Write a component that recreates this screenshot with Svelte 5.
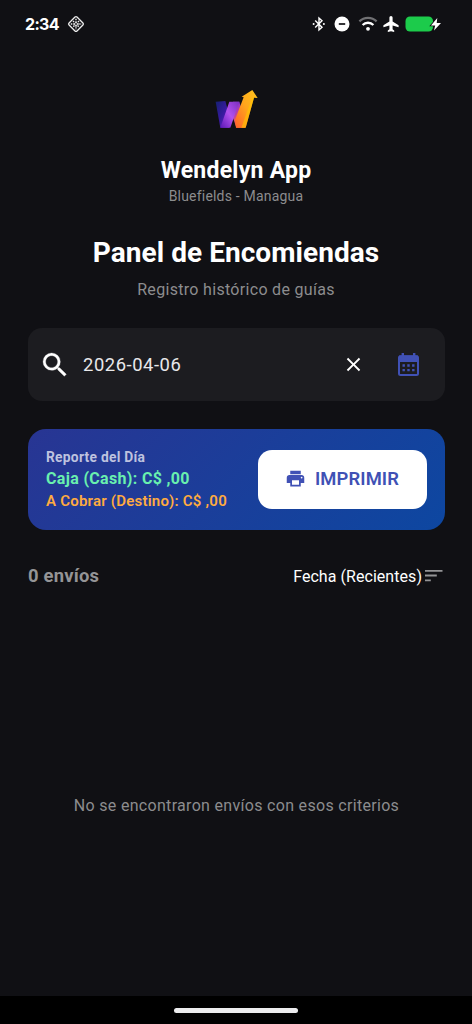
<script lang="ts">
  let query = $state('2026-04-06');

  const report = {
    title: 'Reporte del Día',
    cash: 'Caja (Cash): C$ ,00',
    pending: 'A Cobrar (Destino): C$ ,00',
  };

  const shipments: string[] = [];
  const sortLabel = 'Fecha (Recientes)';
</script>

<div class="screen">
  <div class="status">
    <span class="status__time">2:34</span>
    <svg class="status__app" width="18" height="18" viewBox="0 0 18 18">
      <rect x="3.4" y="3.4" width="11.2" height="11.2" rx="1.4" transform="rotate(45 9 9)" fill="none" stroke="#eee" stroke-width="1.3" />
      <circle cx="9" cy="9" r="1.5" fill="none" stroke="#eee" stroke-width="1" />
      <path d="M9 3.8v3M9 11.2v3M3.8 9h3M11.2 9h3M6 6l1.4 1.4M10.6 10.6l1.4 1.4M12 6l-1.4 1.4M7.4 10.6L6 12" stroke="#eee" stroke-width="1.4" stroke-dasharray="1.5 .7" />
    </svg>
    <div class="status__icons">
      <svg width="14" height="16" viewBox="0 0 14 16">
        <path d="M3.2 4.6l6.8 6.7L7 14V2l3 2.7-6.8 6.7" fill="none" stroke="#fff" stroke-width="1.4" />
        <circle cx="1.6" cy="8" r="1" fill="#fff" />
        <circle cx="11.9" cy="8" r="1" fill="#fff" />
      </svg>
      <svg class="status__dnd" width="16" height="16" viewBox="0 0 16 16">
        <circle cx="8" cy="8" r="7.5" fill="#fff" />
        <path d="M4.8 8h6.4" stroke="#101014" stroke-width="1.7" />
      </svg>
      <svg class="status__wifi" width="20" height="16" viewBox="0 0 20 16">
        <path d="M1.4 5.4a12.4 12.4 0 0 1 17.2 0" fill="none" stroke="#707073" stroke-width="2.3" />
        <path d="M4.6 9a7.600 7.600 0 0 1 10.800 0" fill="none" stroke="#fff" stroke-width="2.3" />
        <circle cx="10" cy="12.800" r="1.900" fill="#fff" />
      </svg>
      <svg class="status__plane" width="16" height="16" viewBox="2 2 20 20">
        <path d="M21.500 16v-2.300L14 9V4a2 2 0 0 0-4 0v5l-7.500 4.700V16l7.500-2v4.500l-2 1.700V22l4-1 4 1v-1.800l-2-1.700V14z" fill="#fff" />
      </svg>
      <svg class="status__battery" width="38" height="16" viewBox="0 0 38 16">
        <rect x="0.500" y=".5" width="27.500" height="15" rx="4.500" fill="#1ccb4b" />
        <path d="M32.300 2L26 9.500h4.200L29 14.400 36 7h-4.300z" fill="#fff" stroke="#101014" stroke-width="1.600" paint-order="stroke" />
      </svg>
    </div>
  </div>

  <header class="header">
    <svg class="logo" width="64" height="60" viewBox="0 0 192 180">
      <defs>
        <linearGradient id="logo-left" x1="0" y1="0" x2="1" y2="1">
          <stop offset="0" stop-color="#142070" />
          <stop offset=".5" stop-color="#381aa0" />
          <stop offset="1" stop-color="#7d24d6" />
        </linearGradient>
        <linearGradient id="logo-mid" x1="1" y1="0" x2="0" y2="1">
          <stop offset="0" stop-color="#7b2fc0" />
          <stop offset=".5" stop-color="#b251ee" />
          <stop offset="1" stop-color="#5b18b6" />
        </linearGradient>
        <linearGradient id="logo-right" x1="0" y1="0" x2="0" y2="1">
          <stop offset="0" stop-color="#8b35d0" />
          <stop offset=".55" stop-color="#c44495" />
          <stop offset="1" stop-color="#ff6b35" />
        </linearGradient>
        <linearGradient id="logo-arrow" x1="1" y1="0" x2="0" y2="1">
          <stop offset="0" stop-color="#ffc51c" />
          <stop offset=".5" stop-color="#ffa41c" />
          <stop offset="1" stop-color="#ff5f2b" />
        </linearGradient>
      </defs>
      <path d="M32 65l29-2 15 56-4 24H46z" fill="url(#logo-left)" />
      <path d="M84 65h19l18 60-1 18H94L80 101z" fill="url(#logo-right)" />
      <path d="M73 65h30L76 143H46z" fill="url(#logo-mid)" />
      <path d="M93 143l-3-24 26-67-6-2 32-20 16 24-11-1-25 90z" fill="url(#logo-arrow)" />
      <path d="M109 143l33-91 5 1-25 90z" fill="#ffc400" opacity=".6" />
    </svg>
    <div class="header__name">Wendelyn App</div>
    <div class="header__route">Bluefields - Managua</div>
    <h1 class="header__title">Panel de Encomiendas</h1>
    <p class="header__subtitle">Registro histórico de guías</p>
  </header>

  <main class="content">
    <div class="search">
      <svg width="32" height="32" viewBox="0 0 24 24">
        <path d="M15.500 14h-.79l-.28-.27A6.470 6.470 0 0 0 16 9.500 6.500 6.500 0 1 0 9.500 16c1.610 0 3.090-.59 4.230-1.570l.27.28v.79l5 4.990L20.490 19zm-6 0C7.010 14 5 11.990 5 9.500S7.010 5 9.500 5 14 7.010 14 9.500 11.990 14 9.500 14z" fill="#fff" stroke="#fff" stroke-width=".2" />
      </svg>
      <input class="search__input" type="text" bind:value={query} aria-label="Buscar" />
      <button class="search__button" aria-label="Limpiar" onclick={() => (query = '')}>
        <svg width="23" height="23" viewBox="0 0 24 24">
          <path d="M19 6.410L17.590 5 12 10.590 6.410 5 5 6.410 10.590 12 5 17.590 6.410 19 12 13.410 17.590 19 19 17.590 13.410 12z" fill="#fff" />
        </svg>
      </button>
      <button class="search__button search__button--date" aria-label="Elegir fecha">
        <svg width="24" height="26" viewBox="0 0 24 26">
          <path d="M5.800 1v4M17.200 1v4" stroke="#4051b5" stroke-width="2.400" />
          <rect x="2" y="4.200" width="19" height="18.800" rx="1.500" fill="none" stroke="#4051b5" stroke-width="2" />
          <path d="M2 3.500h19V10H2z" fill="#4051b5" />
          <path d="M5.500 13.500h2.400M10.300 13.500h2.400M15.100 13.500h2.400M5.500 18.100h2.400M10.300 18.100h2.400M15.100 18.100h2.400" stroke="#4051b5" stroke-width="2.400" />
        </svg>
      </button>
    </div>

    <section class="report">
      <div class="report__info">
        <div class="report__title">{report.title}</div>
        <div class="report__cash">{report.cash}</div>
        <div class="report__pending">{report.pending}</div>
      </div>
      <button class="print">
        <svg width="21" height="21" viewBox="0 0 24 24">
          <path d="M19 8H5c-1.660 0-3 1.340-3 3v6h4v4h12v-4h4v-6c0-1.660-1.340-3-3-3zm-3 11H8v-5h8zm3-7c-.55 0-1-.45-1-1s.45-1 1-1 1 .45 1 1-.45 1-1 1zm-1-9H6v4h12z" fill="#4051b5" />
        </svg>
        <span>IMPRIMIR</span>
      </button>
    </section>

    <div class="toolbar">
      <span class="toolbar__count">{shipments.length} envíos</span>
      <button class="sort">
        <span>{sortLabel}</span>
        <svg width="20" height="14" viewBox="0 0 20 14">
          <path d="M1 1.800h17.500M1 6.500h11.800M1 11.300h5.800" stroke="#949496" stroke-width="1.800" />
        </svg>
      </button>
    </div>

    {#if shipments.length === 0}
      <p class="empty">No se encontraron envíos con esos criterios</p>
    {/if}
  </main>

  <div class="navbar">
    <div class="navbar__handle"></div>
  </div>
</div>

<style>
  :global(body) {
    margin: 0;
    background: #000;
  }

  .screen {
    display: flex;
    flex-direction: column;
    width: 472px;
    height: 1024px;
    overflow: hidden;
    background: #101014;
    color: #fff;
    font-family: Roboto, sans-serif;
  }

  button {
    padding: 0;
    border: 0;
    background: none;
    color: inherit;
    font: inherit;
  }

  svg {
    display: block;
    flex: none;
  }

  .status {
    display: flex;
    align-items: center;
    box-sizing: border-box;
    height: 48px;
    padding: 0 29px 0 25px;
  }

  .status__time {
    width: 42px;
    font: 700 16px/20px Inter, sans-serif;
    letter-spacing: -0.7px;
  }

  .status__icons {
    display: flex;
    align-items: center;
    margin-left: auto;
  }

  .status__dnd {
    margin-left: 8px;
  }

  .status__wifi {
    margin-left: 8px;
  }

  .status__plane {
    margin-left: 5px;
  }

  .status__battery {
    margin-left: 6px;
  }

  .header {
    display: flex;
    flex-direction: column;
    align-items: center;
    padding-top: 32px;
    text-align: center;
  }

  .logo {
    margin-left: 1px;
  }

  .header__name {
    margin-top: 16px;
    font-size: 23px;
    line-height: 30px;
    font-weight: 700;
    letter-spacing: 0.25px;
  }

  .header__route {
    margin-top: 1px;
    font-size: 14px;
    line-height: 18px;
    letter-spacing: 0.2px;
    color: #8c8c8e;
  }

  .header__title {
    margin: 30px 0 0;
    font-size: 28px;
    line-height: 36px;
    font-weight: 700;
    letter-spacing: 0.05px;
  }

  .header__subtitle {
    margin: 8px 0 0;
    font-size: 16px;
    line-height: 22px;
    letter-spacing: 0.31px;
    color: #8c8c8e;
  }

  .content {
    display: flex;
    flex: 1;
    flex-direction: column;
    padding: 27px 27px 0 28px;
  }

  .search {
    display: flex;
    align-items: center;
    box-sizing: border-box;
    height: 73px;
    padding: 0 24px 0 11px;
    border-radius: 14px;
    background: #1c1c20;
  }

  .search__input {
    flex: 1;
    min-width: 0;
    margin-left: 12px;
    padding: 0;
    border: 0;
    outline: 0;
    background: none;
    color: #e8e8ea;
    font: 18.4px/24px Roboto, sans-serif;
    letter-spacing: 0.55px;
  }

  .search__button--date {
    margin-left: 32px;
  }

  .report {
    display: flex;
    align-items: center;
    justify-content: space-between;
    box-sizing: border-box;
    height: 101px;
    margin-top: 28px;
    padding: 0 18px;
    border-radius: 18px;
    background: linear-gradient(135deg, #283593, #0d47a1);
    font-weight: 700;
    white-space: nowrap;
  }

  .report__title {
    font-size: 13.8px;
    line-height: 19px;
    letter-spacing: 0.27px;
    color: #bec2df;
  }

  .report__cash {
    font-size: 16px;
    line-height: 23px;
    letter-spacing: 0.33px;
    color: #69f0ae;
  }

  .report__pending {
    font-size: 15px;
    font-weight: 600;
    line-height: 22px;
    letter-spacing: 0.22px;
    color: #ffab40;
  }

  .print {
    display: flex;
    align-items: center;
    justify-content: center;
    gap: 9px;
    box-sizing: border-box;
    width: 169px;
    height: 59px;
    padding: 0 1px 2px 0;
    border-radius: 14px;
    background: #fff;
    color: #4051b5;
    font-size: 18.4px;
    font-weight: 600;
    letter-spacing: 0.1px;
  }

  .toolbar {
    display: flex;
    align-items: center;
    justify-content: space-between;
    height: 24px;
    margin-top: 33px;
  }

  .toolbar__count {
    font-size: 18.4px;
    font-weight: 700;
    letter-spacing: 0.2px;
    color: #949496;
  }

  .sort {
    display: flex;
    align-items: center;
    gap: 2px;
    padding: 2px 1px 0 0;
    font-size: 16px;
    letter-spacing: 0.05px;
  }

  .empty {
    margin: 208px 0 0;
    font-size: 16px;
    line-height: 22px;
    letter-spacing: 0.31px;
    text-align: center;
    color: #8c8c8e;
  }

  .navbar {
    display: flex;
    align-items: center;
    justify-content: center;
    height: 28px;
    background: #000;
  }

  .navbar__handle {
    width: 124px;
    height: 5px;
    border-radius: 3px;
    background: #ececee;
  }
</style>
